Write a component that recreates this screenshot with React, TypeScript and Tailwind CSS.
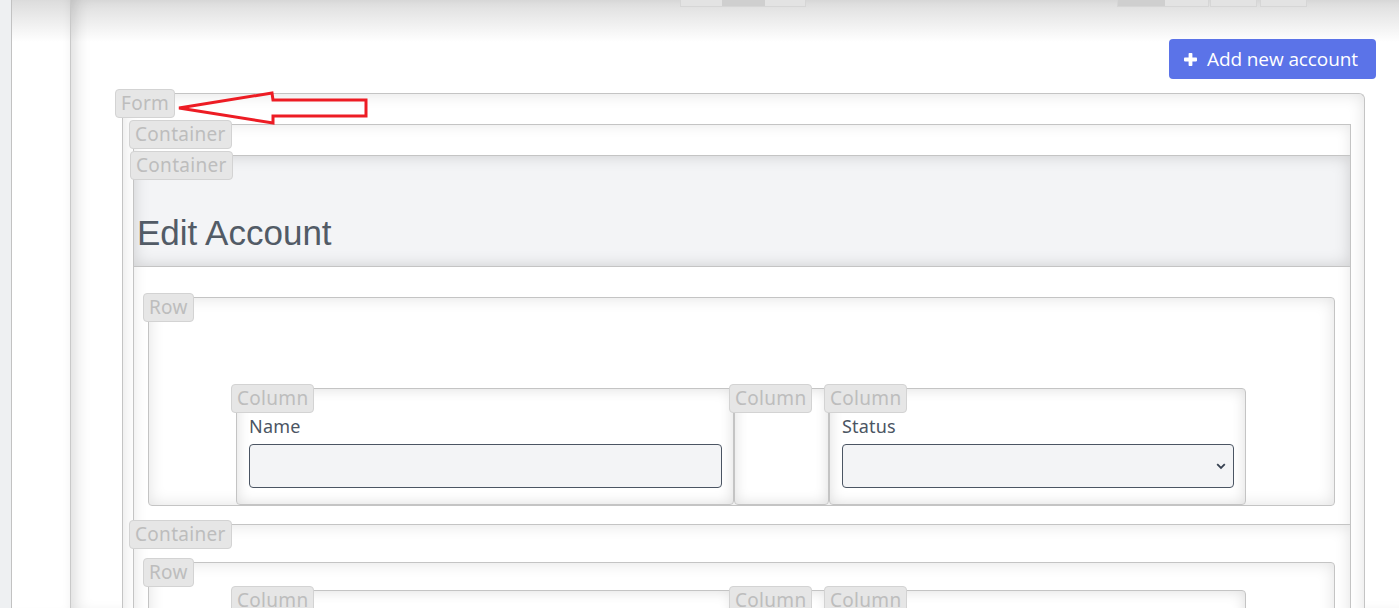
import React from 'react';

const tagFont = { fontFamily: '"Noto Sans", "Open Sans", sans-serif' };

function Tag({ children, pos = '-left-[6px] -top-[5px]' }: { children: React.ReactNode; pos?: string }) {
  return (
    <span
      style={tagFont}
      className={`absolute ${pos} z-10 h-[29px] px-[5px] rounded-[4px] border border-[#d3d3d3] bg-[#e6e6e6] text-[19px] leading-[27px] tracking-[0.3px] text-[#bdbdbd] whitespace-nowrap`}
    >
      {children}
    </span>
  );
}

function Column({ width, label, field, select }: { width: string; label?: string; field?: boolean; select?: boolean }) {
  return (
    <div className={`relative ${width} h-[117px] shrink-0 rounded-[4px] border border-[#c4c4c4] bg-white shadow-[inset_0_0_14px_rgba(0,0,0,0.14)] pt-[25px] pl-[12px] pr-[11px]`}>
      <Tag>Column</Tag>
      {label && (
        <div style={tagFont} className="text-[18px] leading-[24px] text-[#4b5563] tracking-[0.2px]">
          {label}
        </div>
      )}
      {field && !select && (
        <input className="mt-[6px] block w-full h-[44px] rounded-[4px] border border-[#4b5563] bg-[#f3f4f6] outline-none" />
      )}
      {select && (
        <div className="relative mt-[6px]">
          <select className="block w-full h-[44px] appearance-none rounded-[4px] border border-[#4b5563] bg-[#f3f4f6] outline-none" />
          <svg className="absolute right-[8px] top-[19px] pointer-events-none" width="10" height="7" viewBox="0 0 10 7">
            <path d="M1.2 1.2 L5 5 L8.8 1.2" fill="none" stroke="#374151" strokeWidth="1.8" />
          </svg>
        </div>
      )}
    </div>
  );
}

function Row({ pt, children }: { pt: string; children: React.ReactNode }) {
  return (
    <div className={`relative ml-[14px] mr-[15px] rounded-[4px] border border-[#c4c4c4] bg-white shadow-[inset_0_0_16px_rgba(0,0,0,0.12)] ${pt} pl-[87px] flex`}>
      <Tag>Row</Tag>
      {children}
    </div>
  );
}

export default function App() {
  return (
    <div className="relative w-[1399px] h-[608px] overflow-hidden flex bg-[linear-gradient(#dcdcdc,#ffffff_42px)]">
      {/* left rails */}
      <div className="w-[12px] shrink-0 border-r border-[#c2c2c2] bg-[#eef0f2]" />
      <div className="w-[59px] shrink-0 border-r border-[#c9c9c9] shadow-[inset_-6px_0_10px_-6px_rgba(0,0,0,0.06)]" />

      <main className="flex-1 flex flex-col shadow-[inset_12px_0_16px_-8px_rgba(0,0,0,0.15)]">
        {/* cut-off toolbar */}
        <div className="h-[7px] shrink-0 flex items-stretch">
          <div className="ml-[609px] flex border border-t-0 border-[#d6d6d6]">
            <div className="w-[41px] bg-[#e3e3e3]" />
            <div className="w-[43px] bg-[#cfcfcf]" />
            <div className="w-[40px] bg-[#e3e3e3]" />
          </div>
          <div className="ml-[311px] flex border border-t-0 border-[#d6d6d6]">
            <div className="w-[47px] bg-[#cfcfcf]" />
            <div className="w-[43px] bg-[#e3e3e3]" />
          </div>
          <div className="ml-[1px] w-[47px] border border-t-0 border-[#d6d6d6] bg-[#e3e3e3]" />
          <div className="ml-[3px] w-[47px] border border-t-0 border-[#d6d6d6] bg-[#e3e3e3]" />
        </div>

        <div className="mt-[32px] shrink-0 flex justify-end pr-[23px]">
          <button
            style={{ fontFamily: '"Open Sans", "Noto Sans", sans-serif' }}
            className="h-[40px] w-[207px] rounded-[4px] bg-[#5b73e8] text-white text-[19px] flex items-center pl-[15px] gap-[10px]"
          >
            <svg width="13" height="13" viewBox="0 0 13 13">
              <rect x="4.6" y="0" width="3.8" height="13" rx="0.8" fill="#fff" />
              <rect x="0" y="4.6" width="13" height="3.8" rx="0.8" fill="#fff" />
            </svg>
            <span className="tracking-[-0.1px]">Add new account</span>
          </button>
        </div>

        {/* Form */}
        <div className="relative mt-[14px] ml-[51px] w-[1243px] h-[600px] shrink-0 rounded-tr-[6px] border border-b-0 border-[#c4c4c4] bg-white shadow-[inset_0_0_16px_rgba(0,0,0,0.12)] pt-[30px] pl-[10px] pr-[13px]">
          <Tag pos="-left-[8px] -top-[5px]">Form</Tag>

          {/* Container */}
          <div className="relative h-full border border-b-0 border-[#c4c4c4] bg-white shadow-[inset_0_0_14px_rgba(0,0,0,0.1)] pt-[30px]">
            <Tag pos="-left-[5px] -top-[5px]">Container</Tag>

            {/* header container */}
            <div className="relative -mx-px h-[112px] border border-[#c4c4c4] bg-[#f3f4f6] shadow-[inset_0_0_16px_rgba(0,0,0,0.16)] pt-[57px] pl-[3px]">
              <Tag pos="-left-[4px] -top-[5px]">Container</Tag>
              <h1
                style={{ fontFamily: '"Liberation Sans", Arial, sans-serif' }}
                className="text-[35px] leading-[40px] text-[#525b66]"
              >
                Edit Account
              </h1>
            </div>

            <div className="mt-[30px]">
              <Row pt="pt-[90px]">
                <Column width="w-[498px]" label="Name" field />
                <Column width="w-[95px]" />
                <Column width="w-[417px]" label="Status" field select />
              </Row>
            </div>

            {/* second container */}
            <div className="relative -mx-px mt-[18px] h-[200px] border border-b-0 border-[#c4c4c4] bg-white shadow-[inset_0_0_16px_rgba(0,0,0,0.12)] pt-[37px]">
              <Tag pos="-left-[5px] -top-[5px]">Container</Tag>
              <Row pt="pt-[27px]">
                <Column width="w-[498px]" />
                <Column width="w-[95px]" />
                <Column width="w-[417px]" />
              </Row>
            </div>
          </div>
        </div>
      </main>

      {/* annotation arrow */}
      <svg className="absolute left-0 top-0 pointer-events-none" width="1399" height="608">
        <polygon
          points="179,108 272,93 273,100 366,100 366,116 273,116 273,123"
          fill="none"
          stroke="#ed1c24"
          strokeWidth="3"
          strokeLinejoin="miter"
        />
      </svg>
    </div>
  );
}
